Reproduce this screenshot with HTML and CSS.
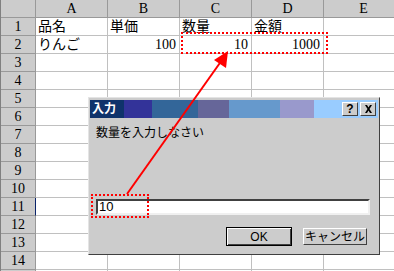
FILE: index.html
```html
<!DOCTYPE html>
<html lang="ja">
<head>
    <meta charset="UTF-8">
    <title>入力</title>
    <link rel="stylesheet" href="styles.css">
</head>
<body>
    <div class="page">
        <div class="strip"></div>
        <div class="sheet">
            <div class="ch corner"></div><div class="ch">A</div><div class="ch">B</div><div class="ch">C</div><div class="ch">D</div><div class="ch">E</div>
            <div class="rh">1</div><div class="cell">品名</div><div class="cell">単価</div><div class="cell">数量</div><div class="cell">金額</div><div class="cell"></div>
            <div class="rh">2</div><div class="cell">りんご</div><div class="cell num">100</div><div class="cell num">10</div><div class="cell num">1000</div><div class="cell"></div>
            <div class="rh">3</div><div class="cell"></div><div class="cell"></div><div class="cell"></div><div class="cell"></div><div class="cell"></div>
            <div class="rh">4</div><div class="cell"></div><div class="cell"></div><div class="cell"></div><div class="cell"></div><div class="cell"></div>
            <div class="rh">5</div><div class="cell"></div><div class="cell"></div><div class="cell"></div><div class="cell"></div><div class="cell"></div>
            <div class="rh">6</div><div class="cell"></div><div class="cell"></div><div class="cell"></div><div class="cell"></div><div class="cell"></div>
            <div class="rh">7</div><div class="cell"></div><div class="cell"></div><div class="cell"></div><div class="cell"></div><div class="cell"></div>
            <div class="rh">8</div><div class="cell"></div><div class="cell"></div><div class="cell"></div><div class="cell"></div><div class="cell"></div>
            <div class="rh">9</div><div class="cell"></div><div class="cell"></div><div class="cell"></div><div class="cell"></div><div class="cell"></div>
            <div class="rh">10</div><div class="cell"></div><div class="cell"></div><div class="cell"></div><div class="cell"></div><div class="cell"></div>
            <div class="rh active">11</div><div class="cell"></div><div class="cell"></div><div class="cell"></div><div class="cell"></div><div class="cell"></div>
            <div class="rh">12</div><div class="cell"></div><div class="cell"></div><div class="cell"></div><div class="cell"></div><div class="cell"></div>
            <div class="rh">13</div><div class="cell"></div><div class="cell"></div><div class="cell"></div><div class="cell"></div><div class="cell"></div>
            <div class="rh">14</div><div class="cell"></div><div class="cell"></div><div class="cell"></div><div class="cell"></div><div class="cell"></div>
            <div class="rh"></div><div class="cell"></div><div class="cell"></div><div class="cell"></div><div class="cell"></div><div class="cell"></div>
        </div>
    </div>

    <div class="mark mark-cells"></div>

    <div class="dialog">
        <div class="titlebar">
            <div class="seg seg1">入力</div>
            <div class="seg seg2"></div>
            <div class="seg seg3"></div>
            <div class="seg seg4"></div>
            <div class="seg seg5"></div>
            <div class="seg seg6"></div>
            <div class="seg seg7">
                <span class="tbtn">?</span>
                <span class="tbtn">
                    <svg width="9" height="8" viewBox="0 0 9 8"><path d="M1 0h2l1.5 2.5L6 0h2L5.5 4 8 8H6L4.5 5.5 3 8H1l2.5-4z" fill="#000"/></svg>
                </span>
            </div>
        </div>
        <div class="dlg-body">
            <div class="prompt">数量を入力しなさい</div>
            <div class="field">10</div>
            <div class="actions">
                <button class="btn default">OK</button>
                <button class="btn">キャンセル</button>
            </div>
        </div>
    </div>

    <div class="mark mark-input"></div>

    <svg class="arrow" width="394" height="271" viewBox="0 0 394 271">
        <line x1="127" y1="194" x2="222" y2="60" stroke="#ff0000" stroke-width="2"/>
        <polygon points="228,51 226,68 214,60" fill="#ff0000"/>
    </svg>
</body>
</html>
```

FILE: styles.css
```css
body {
    margin: 0;
    width: 394px;
    height: 271px;
    overflow: hidden;
    background: #ffffff;
    position: relative;
}

.page {
    display: flex;
}

.strip {
    width: 3px;
    background: #b4b4b4;
    border-right: 1px solid #808080;
}

.sheet {
    display: grid;
    grid-template-columns: 35px 72px 72px 72px 72px 80px;
    grid-auto-rows: 18px;
    font-family: "Liberation Serif", "Noto Sans CJK JP", serif;
    font-size: 14px;
    color: #000;
}

.ch,
.rh {
    box-sizing: border-box;
    background: #cccccc;
    border-right: 1px solid #999999;
    border-bottom: 1px solid #999999;
    text-align: center;
    line-height: 17px;
}

.rh.active {
    border-right-color: #0a246a;
}

.cell {
    box-sizing: border-box;
    border-right: 1px solid #c0c0c0;
    border-bottom: 1px solid #c0c0c0;
    padding: 0 3px 0 2px;
    line-height: 18px;
    white-space: nowrap;
}

.num {
    text-align: right;
}

/* red dotted highlights */
.mark {
    position: absolute;
    box-sizing: border-box;
    border: 2px dotted #ff0000;
}

.mark-cells {
    left: 181px;
    top: 32px;
    width: 147px;
    height: 22px;
}

.mark-input {
    left: 91px;
    top: 194px;
    width: 58px;
    height: 24px;
}

.arrow {
    position: absolute;
    left: 0;
    top: 0;
}

/* input dialog */
.dialog {
    position: absolute;
    left: 88px;
    top: 97px;
    width: 292px;
    height: 158px;
    box-sizing: border-box;
    background: #cccccc;
    border: 1px solid;
    border-color: #e4e4e4 #404040 #404040 #e4e4e4;
    padding: 1px;
    font-family: "Liberation Sans", "Noto Sans CJK JP", sans-serif;
    font-size: 12px;
}

.titlebar {
    display: flex;
    height: 18px;
    margin-top: 1px;
}

.seg {
    height: 18px;
}

.seg1 {
    width: 34px;
    background: #0f336b;
    color: #ffffff;
    font-weight: bold;
    line-height: 18px;
    padding-left: 2px;
    box-sizing: border-box;
}

.seg2 { width: 28px; background: #333399; }
.seg3 { width: 46px; background: #336699; }
.seg4 { width: 31px; background: #666699; }
.seg5 { width: 51px; background: #6699cc; }
.seg6 { width: 34px; background: #9999cc; }

.seg7 {
    flex: 1;
    background: #99ccff;
    display: flex;
    justify-content: flex-end;
    align-items: center;
    gap: 2px;
    padding-right: 2px;
}

.tbtn {
    width: 16px;
    height: 14px;
    box-sizing: border-box;
    background: #cccccc;
    border: 1px solid;
    border-color: #ffffff #404040 #404040 #ffffff;
    display: flex;
    align-items: center;
    justify-content: center;
    font-weight: bold;
    font-size: 12px;
    line-height: 12px;
}

.dlg-body {
    padding: 0 0 0 6px;
}

.prompt {
    margin-top: 8px;
    line-height: 14px;
    color: #000;
}

.field {
    margin-top: 59px;
    width: 274px;
    height: 16px;
    box-sizing: border-box;
    background: #ffffff;
    border: 2px solid;
    border-color: #404040 #f0f0f0 #f0f0f0 #404040;
    font-size: 13px;
    line-height: 12px;
    padding-left: 1px;
}

.actions {
    display: flex;
    justify-content: flex-end;
    align-items: center;
    gap: 11px;
    margin-top: 12px;
    margin-right: 11px;
    height: 19px;
}

.btn {
    box-sizing: border-box;
    width: 64px;
    height: 17px;
    padding: 0;
    background: #cccccc;
    border: 1px solid;
    border-color: #ffffff #404040 #404040 #ffffff;
    font-family: "Liberation Sans", "Noto Sans CJK JP", sans-serif;
    font-size: 12px;
    line-height: 14px;
    color: #000;
}

.btn.default {
    width: 66px;
    height: 19px;
    border: 1px solid #000;
    box-shadow: inset 1px 1px 0 #ffffff, inset -1px -1px 0 #404040;
}
```
